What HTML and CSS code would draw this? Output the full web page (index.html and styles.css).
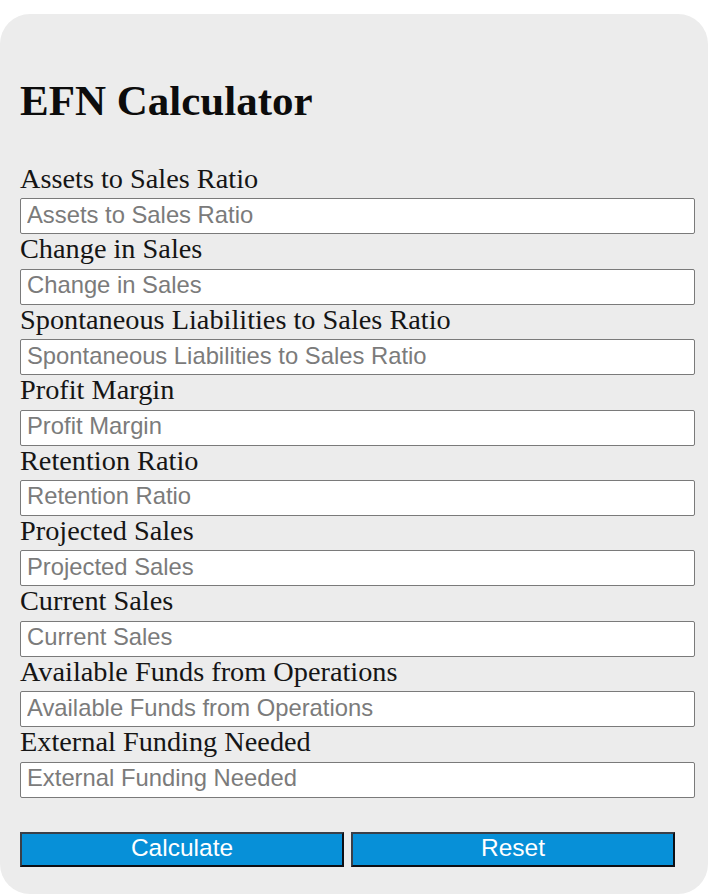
FILE: index.html
```html
<!DOCTYPE html>
<html>
<head>
<meta charset="utf-8">
<title>EFN Calculator</title>
<link rel="stylesheet" href="styles.css">
</head>
<body>
<div class="card">
  <h1 class="title">EFN Calculator</h1>
  <form class="form">
    <label class="label" for="a">Assets to Sales Ratio</label>
    <input class="field" id="a" type="text" placeholder="Assets to Sales Ratio">
    <label class="label" for="b">Change in Sales</label>
    <input class="field" id="b" type="text" placeholder="Change in Sales">
    <label class="label" for="c">Spontaneous Liabilities to Sales Ratio</label>
    <input class="field" id="c" type="text" placeholder="Spontaneous Liabilities to Sales Ratio">
    <label class="label" for="d">Profit Margin</label>
    <input class="field" id="d" type="text" placeholder="Profit Margin">
    <label class="label" for="e">Retention Ratio</label>
    <input class="field" id="e" type="text" placeholder="Retention Ratio">
    <label class="label" for="f">Projected Sales</label>
    <input class="field" id="f" type="text" placeholder="Projected Sales">
    <label class="label" for="g">Current Sales</label>
    <input class="field" id="g" type="text" placeholder="Current Sales">
    <label class="label" for="h">Available Funds from Operations</label>
    <input class="field" id="h" type="text" placeholder="Available Funds from Operations">
    <label class="label" for="i">External Funding Needed</label>
    <input class="field" id="i" type="text" placeholder="External Funding Needed">
    <div class="actions">
      <button class="btn btn-calc" type="button">Calculate</button>
      <button class="btn btn-reset" type="reset">Reset</button>
    </div>
  </form>
</div>
</body>
</html>
```

FILE: styles.css
```css
html, body {
  margin: 0;
  padding: 0;
  background: #ffffff;
}

body {
  padding-top: 14px;
  font-family: "Liberation Serif", "Times New Roman", serif;
  color: #111;
}

.card {
  box-sizing: border-box;
  width: 708px;
  height: 880px;
  background: #ececec;
  border-radius: 30px;
  padding: 62px 13px 0 20px;
}

.title {
  margin: 0;
  font-family: "Liberation Serif", "Times New Roman", serif;
  font-weight: bold;
  font-size: 43px;
  line-height: 50px;
  color: #0c0c0c;
}

.form {
  display: flex;
  flex-direction: column;
  margin-top: 38px;
}

.label {
  display: block;
  font-size: 28.3px;
  line-height: 30px;
  color: #151515;
}

.field {
  box-sizing: border-box;
  display: block;
  width: 100%;
  height: 36px;
  margin: 4.4px 0 0 0;
  padding: 0 6px 3px 6px;
  border: 1px solid #7a7a7a;
  border-radius: 2px;
  background: #ffffff;
  font-family: "Liberation Sans", Arial, sans-serif;
  font-size: 23.8px;
  color: #222;
  outline: none;
}

.field::placeholder {
  color: #7b7b7b;
  opacity: 1;
}

.actions {
  display: flex;
  gap: 7px;
  margin-top: 34px;
  width: 655px;
}

.btn {
  box-sizing: border-box;
  height: 35px;
  flex: 1;
  margin: 0;
  padding: 0 0 3px 0;
  background: #0790d8;
  color: #ffffff;
  border: 2px solid;
  border-color: #3a3f48 #0d0f14 #0d0f14 #3a3f48;
  border-radius: 0;
  font-family: "Liberation Sans", Arial, sans-serif;
  font-size: 24.5px;
  line-height: 28px;
  cursor: pointer;
}
```
